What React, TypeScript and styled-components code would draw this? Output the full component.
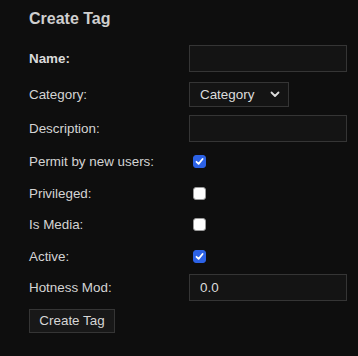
import React from "react";
import styled, { createGlobalStyle } from "styled-components";

const GlobalStyle = createGlobalStyle`
  html, body {
    margin: 0;
    padding: 0;
    background: #0e0e0e;
  }
  body {
    font-family: "Liberation Sans", Arial, Helvetica, sans-serif;
    color: #d6d6d6;
  }
`

const Page = styled.div`
  width: 358px;
  height: 356px;
  box-sizing: border-box;
  padding: 9px 0 0 29px;
  background: #0e0e0e;
`

const Title = styled.h2`
  margin: 0;
  font-size: 16px;
  line-height: 20px;
  font-weight: bold;
  color: #cfcfcf;
  height: 31.5px;
`

const Row = styled.div<{ $h: number }>`
  display: flex;
  align-items: center;
  height: ${p => p.$h}px;
`

const Label = styled.label<{ $bold?: boolean }>`
  width: 160px;
  flex: none;
  font-size: 13.4px;
  font-weight: ${p => (p.$bold ? "bold" : "normal")};
  color: ${p => (p.$bold ? "#dadada" : "#d4d4d4")};
`

const TextInput = styled.input`
  box-sizing: border-box;
  width: 158px;
  height: 27px;
  margin: 0;
  padding: 0 10px;
  background: #141414;
  border: 1px solid #353535;
  border-radius: 0;
  color: #dcdcdc;
  font-family: "Liberation Sans", Arial, sans-serif;
  font-size: 13.4px;
  outline: none;
`

const SelectBox = styled.div`
  box-sizing: border-box;
  width: 100px;
  height: 25px;
  display: flex;
  align-items: center;
  justify-content: space-between;
  padding: 0 8px 0 10px;
  background: #141414;
  border: 1px solid #353535;
  font-size: 13.4px;
  color: #dcdcdc;
`

const Box = styled.span<{ $on: boolean }>`
  box-sizing: border-box;
  display: inline-flex;
  align-items: center;
  justify-content: center;
  width: 13px;
  height: 13px;
  margin-left: 4px;
  border-radius: 3px;
  background: ${p => (p.$on ? "#2c62e6" : "#ffffff")};
  border: 1px solid ${p => (p.$on ? "#2c62e6" : "#9a9a9a")};
`

const Button = styled.button`
  box-sizing: border-box;
  width: 86px;
  height: 24px;
  margin: 0;
  padding: 0;
  background: #181818;
  border: 1px solid #353535;
  color: #d6d6d6;
  font-family: "Liberation Sans", Arial, sans-serif;
  font-size: 13.4px;
`

function Check({ on }: { on: boolean }) {
  return (
    <Box $on={on}>
      {on && (
        <svg width="9" height="9" viewBox="0 0 9 9">
          <path d="M1.5 4.8 L3.6 6.8 L7.6 2" stroke="#fff" strokeWidth="1.8" fill="none" strokeLinecap="round" strokeLinejoin="round" />
        </svg>
      )}
    </Box>
  )
}

export default function App() {
  return (
    <Page>
      <GlobalStyle />
      <Title>Create Tag</Title>
      <Row $h={36}>
        <Label $bold>Name:</Label>
        <TextInput />
      </Row>
      <Row $h={35}>
        <Label>Category:</Label>
        <SelectBox>
          <span>Category</span>
          <svg width="10" height="7" viewBox="0 0 10 7">
            <path d="M1.5 1.5 L5 5 L8.5 1.5" stroke="#dcdcdc" strokeWidth="1.8" fill="none" strokeLinecap="round" strokeLinejoin="round" />
          </svg>
        </SelectBox>
      </Row>
      <Row $h={33}>
        <Label>Description:</Label>
        <TextInput />
      </Row>
      <Row $h={33}>
        <Label>Permit by new users:</Label>
        <Check on />
      </Row>
      <Row $h={31}>
        <Label>Privileged:</Label>
        <Check on={false} />
      </Row>
      <Row $h={32}>
        <Label>Is Media:</Label>
        <Check on={false} />
      </Row>
      <Row $h={31}>
        <Label>Active:</Label>
        <Check on />
      </Row>
      <Row $h={32}>
        <Label>Hotness Mod:</Label>
        <TextInput defaultValue="0.0" />
      </Row>
      <Row $h={34}>
        <Button>Create Tag</Button>
      </Row>
    </Page>
  )
}
